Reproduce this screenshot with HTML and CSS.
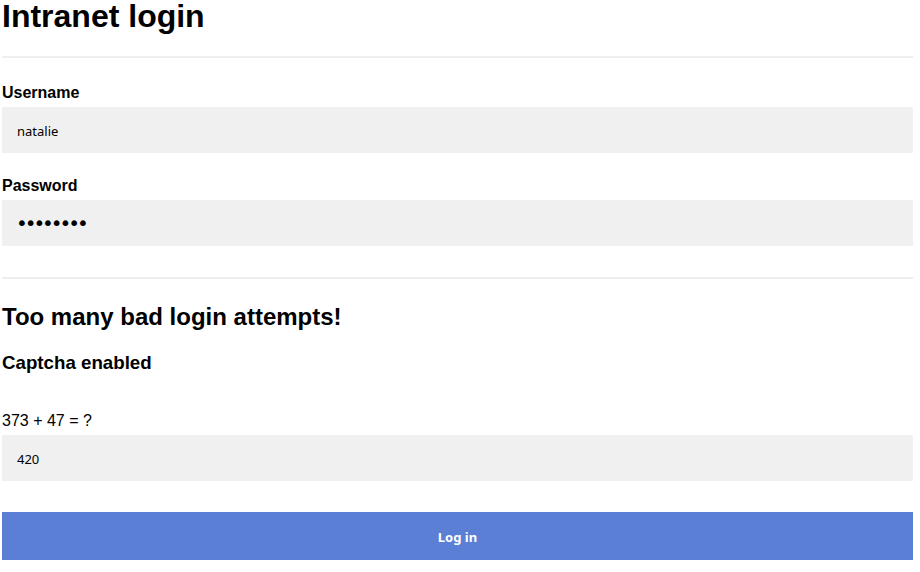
FILE: index.html
```html
<!DOCTYPE html>
<html lang="en">
<head>
<meta charset="utf-8">
<title>Intranet login</title>
<link rel="stylesheet" href="styles.css">
</head>
<body>
<main class="page">
  <h1 class="title">Intranet login</h1>
  <hr class="rule rule-top">
  <form class="form">
    <label class="label label-first" for="user">Username</label>
    <input class="field" id="user" type="text" value="natalie">
    <label class="label label-next" for="pass">Password</label>
    <input class="field field-pass" id="pass" type="password" value="password">
    <hr class="rule rule-mid">
    <h2 class="warning">Too many bad login attempts!</h2>
    <h3 class="sub">Captcha enabled</h3>
    <label class="question" for="captcha">373 + 47 = ?</label>
    <input class="field" id="captcha" type="text" value="420">
    <button class="submit" type="button">Log in</button>
  </form>
</main>
</body>
</html>
```
FILE: styles.css
```css
* { box-sizing: border-box; }
html, body { margin: 0; padding: 0; background: #fff; }
body { font-family: "Liberation Sans", Arial, sans-serif; color: #000; }
.page { padding: 0 7px 0 2px; }
.title { margin: -2px 0 0; font-size: 32px; line-height: 37px; font-weight: 700; }
.rule { border: 0; height: 2px; background: #eeeeee; margin: 0; }
.rule-top { margin-top: 21px; }
.form { display: flex; flex-direction: column; }
.label { display: block; font-size: 16px; font-weight: 700; line-height: 18px; }
.label-first { margin-top: 26px; margin-bottom: 5px; }
.label-next { margin-top: 24px; margin-bottom: 5px; }
.field {
  display: block; width: 100%; height: 46px; border: 0; outline: 0;
  background: #f0f0f0; padding: 2px 15px 0; margin: 0;
  font-family: "Noto Sans", sans-serif; font-size: 13px; color: #000;
}
.field-pass { font-family: "DejaVu Sans", sans-serif; font-size: 20px; letter-spacing: -3.1px; padding: 0 15px 0 14px; }
.rule-mid { margin-top: 31px; }
.warning { margin: 24px 0 0; font-size: 24px; font-weight: 700; line-height: normal; }
.sub { margin: 21px 0 0; font-size: 18.72px; font-weight: 700; line-height: normal; }
.question { display: block; margin: 38px 0 5px; font-size: 16px; line-height: 18px; }
.submit {
  margin-top: 31px; height: 48px; width: 100%; border: 0; padding: 2px 0 0;
  background: #5b7fd5; color: #fff;
  font-family: "Noto Sans", sans-serif; font-size: 13px; font-weight: 700;
}
```
